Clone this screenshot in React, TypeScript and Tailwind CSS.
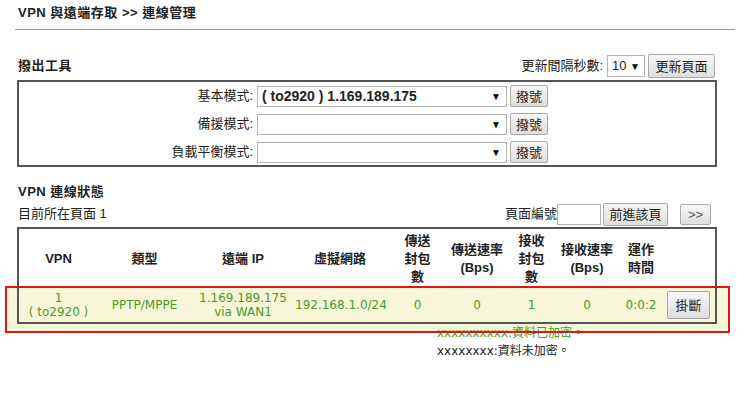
const btn =
  'flex items-center justify-center border border-[#a8a8a8] rounded-[2px] bg-gradient-to-b from-[#f7f7f7] to-[#dedede] text-[13px] text-[#222] leading-none';

function Select({ value, bold }: { value?: string; bold?: boolean }) {
  return (
    <div className="flex items-center w-[250px] h-[21px] border border-[#b4b4b4] bg-white pl-[4px] pr-[5px]">
      <span className={`flex-1 text-[14px] ${bold ? 'font-bold' : ''}`}>{value}</span>
      <span className="text-[10px] text-black">▼</span>
    </div>
  );
}

function DialRow({ label, value }: { label: string; value?: string }) {
  return (
    <div className="flex items-center h-[22px]">
      <div className="w-[234px] text-right text-[13px]">{label}</div>
      <div className="ml-[4px]">
        <Select value={value} bold />
      </div>
      <button className={`${btn} ml-[3px] w-[38px] h-[22px]`}>撥號</button>
    </div>
  );
}

const cols = 'grid grid-cols-[79px_93px_104px_90px_65px_54px_55px_56px_52px_48px]';

export default function App() {
  return (
    <div className="relative w-[750px] h-[393px] overflow-hidden bg-white text-[#222] font-['Liberation_Sans','Noto_Sans_CJK_TC',sans-serif]">
      {/* annotation highlight fill */}
      <div className="absolute left-[7px] top-[288px] w-[721px] h-[43px] bg-[#f8f6d8]" />

      <div className="relative z-[1]">
        <div className="pl-[18px] pt-[5px] text-[13px] font-bold leading-[16px] tracking-[0.5px]">
          VPN 與遠端存取 &gt;&gt; 連線管理
        </div>
        <div className="mt-[8px] ml-[15px] mr-[15px] h-px bg-[#9a9a9a]" />

        <div className="mt-[24px] ml-[17px] w-[700px] flex items-center h-[24px]">
          <div className="pl-[1px] text-[13px] font-bold tracking-[0.5px]">撥出工具</div>
          <div className="ml-auto flex items-center pr-[2px]">
            <span className="text-[13px]">更新間隔秒數:</span>
            <div className="ml-[4px] flex items-center w-[38px] h-[22px] border border-[#b4b4b4] bg-white pl-[4px] pr-[4px]">
              <span className="flex-1 text-[13px]">10</span>
              <span className="text-[10px] text-black">▼</span>
            </div>
            <button className={`${btn} ml-[3px] w-[67px] h-[24px]`}>更新頁面</button>
          </div>
        </div>

        <div className="mt-[2px] ml-[17px] w-[700px] h-[87px] border-2 border-[#555] pt-[3px] flex flex-col gap-[6px]">
          <DialRow label="基本模式:" value="( to2920 ) 1.169.189.175" />
          <DialRow label="備援模式:" />
          <DialRow label="負載平衡模式:" />
        </div>

        <div className="mt-[17px] pl-[18px] text-[13px] font-bold leading-[16px] tracking-[0.5px]">VPN 連線狀態</div>

        <div className="mt-[2px] ml-[17px] w-[700px] flex items-center h-[24px]">
          <div className="pl-[1px] text-[13px]">目前所在頁面 1</div>
          <div className="ml-auto flex items-center pr-[6px]">
            <span className="text-[13px]">頁面編號</span>
            <div className="w-[44px] h-[21px] border border-[#b4b4b4] bg-white" />
            <button className={`${btn} ml-[2px] w-[65px] h-[23px]`}>前進該頁</button>
            <button className={`${btn} ml-[12px] w-[31px] h-[21px] text-[11px] text-[#555]`}>&gt;&gt;</button>
          </div>
        </div>

        <div className="mt-[1px] ml-[17px] w-[700px] border-2 border-[#555]">
          <div className={`${cols} h-[59px] bg-white items-center text-center text-[13px] font-bold leading-[18px]`}>
            <div>VPN</div>
            <div>類型</div>
            <div>遠端 IP</div>
            <div>虛擬網路</div>
            <div>傳送<br />封包<br />數</div>
            <div>傳送速率<br />(Bps)</div>
            <div>接收<br />封包<br />數</div>
            <div>接收速率<br />(Bps)</div>
            <div>運作<br />時間</div>
            <div />
          </div>
          <div className={`${cols} h-[34px] bg-[#f8f6d8] items-center text-center text-[12px] leading-[14px] text-[#4a9a2a] font-['DejaVu_Sans','Noto_Sans_CJK_TC',sans-serif]`}>
            <div>1<br />( to2920 )</div>
            <div>PPTP/MPPE</div>
            <div>1.169.189.175<br />via WAN1</div>
            <div>192.168.1.0/24</div>
            <div>0</div>
            <div>0</div>
            <div>1</div>
            <div>0</div>
            <div>0:0:2</div>
            <div className="flex justify-start">
              <button className={`${btn} w-[43px] h-[28px] font-['Liberation_Sans','Noto_Sans_CJK_TC',sans-serif]`}>掛斷</button>
            </div>
          </div>
        </div>

        <div className="pl-[437px] text-[12px] leading-[18px] font-['DejaVu_Sans','Noto_Sans_CJK_TC',sans-serif]">
          <div className="text-[#4a9a2a]">xxxxxxxxxx:資料已加密。</div>
          <div className="text-[#222]">xxxxxxxx:資料未加密。</div>
        </div>
      </div>

      {/* annotation frame */}
      <div className="pointer-events-none absolute z-[2] left-[5px] top-[286px] w-[725px] h-[47px] border-2 border-[#e01515]" />
    </div>
  );
}
